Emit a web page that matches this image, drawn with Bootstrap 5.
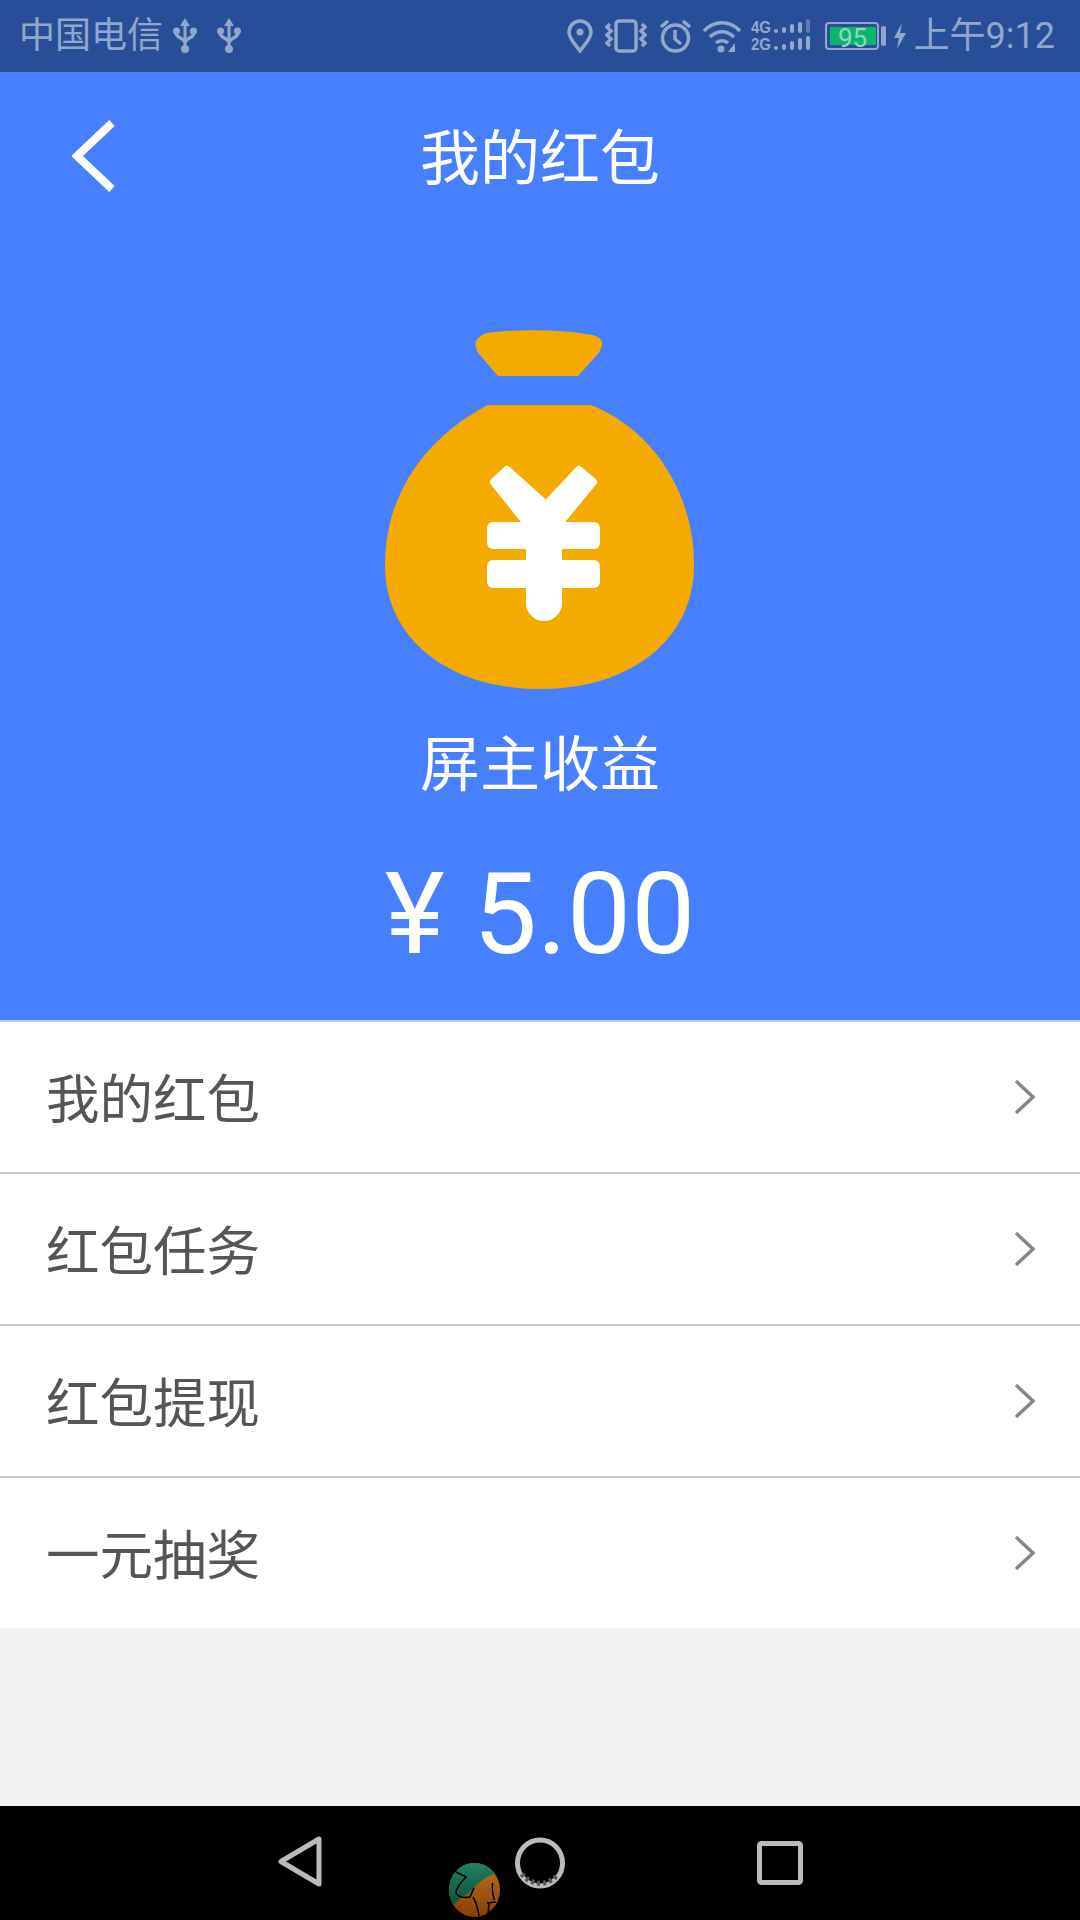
<!DOCTYPE html>
<html lang="zh">
<head>
  <meta charset="UTF-8">
  <title>我的红包</title>
  <meta name="viewport" content="width=device-width, initial-scale=1">
  <link href="https://cdn.jsdelivr.net/npm/bootstrap@5.3.0/dist/css/bootstrap.min.css" rel="stylesheet">
  <style>
    body { width: 1080px; height: 1920px; background: #f2f2f2; font-family: Roboto, "Noto Sans CJK SC", sans-serif; overflow: hidden; }
    .phone-page { height: 1920px; }
    .status-strip { height: 72px; background: #284e99; color: #93a6cc; font-size: 36px; line-height: 72px; padding: 0 25px 0 19px; }
    .status-strip svg { display: block; flex: none; }
    .status-strip .st-ico { fill: none; stroke: #93a6cc; stroke-width: 3.5; }
    .status-strip .st-fill { fill: #93a6cc; stroke: none; }
    .carrier-text { margin-right: 10px; }
    .usb-gap { margin-left: 20px; }
    .ico-gap { margin-left: 12px; }
    .wifi-gap { margin-left: 10px; }
    .net-gap { margin-left: 9px; }
    .batt-gap { margin-left: 14px; }
    .tail-gap { margin-left: 2px; }
    .bolt-gap { margin-left: 7px; }
    .clock-text { margin-left: 8px; white-space: nowrap; }
    .net-text { font-family: "Liberation Sans", sans-serif; font-size: 16px; font-weight: 700; fill: #93a6cc; }
    .batt-box { width: 54px; height: 28px; border: 2px solid #93a6cc; border-radius: 4px; padding: 3px; }
    .batt-level { background: #0ab66c; color: #93d5c0; font-size: 26px; line-height: 22px; height: 100%; width: 46px; text-align: center; }
    .hero-box { height: 948px; background: #4680ff; color: #fff; }
    .title-row { height: 172px; font-size: 60px; line-height: 176px; text-align: center; }
    .back-ico { position: absolute; left: 72px; top: 48px; }
    .bag-ico { display: block; margin: 66px auto 0 auto; }
    .earn-label { margin-top: 26px; font-size: 60px; line-height: 80px; text-align: center; }
    .earn-amount { margin-top: 48px; font-size: 114px; line-height: 120px; text-align: center; }
    .menu-list { border-top: 2px solid #ccc; }
    .menu-list .list-group-item { height: 152px; padding: 0 44px 0 46px; font-size: 53.5px; color: #555; border-color: #ccc; border-bottom-width: 2px; background: #fff; }
    .menu-list .list-group-item:last-child { height: 150px; border-bottom-width: 0; }
    .menu-text { padding-top: 9px; }
    .filler-box { flex: 1; }
    .nav-strip { height: 114px; background: #000; }
    .nav-ico { position: absolute; top: 0; left: 0; }
  </style>
</head>
<body class="m-0">
  <div class="phone-page d-flex flex-column">

    <!-- status bar -->
    <div class="status-strip d-flex align-items-center">
      <span class="carrier-text">中国电信</span>
      <svg width="24" height="36" viewBox="0 0 24 36"><path class="st-fill" d="M12 0l5 8h-3.500v20h-3V8H7z"/><circle class="st-fill" cx="12" cy="31" r="4"/><circle class="st-fill" cx="3.500" cy="13" r="3.500"/><circle class="st-fill" cx="20.500" cy="13" r="3.500"/><path class="st-ico" d="M3.500 13v3c0 4 8.500 4 8.500 9M20.500 13v3c0 4-8.500 4-8.500 9"/></svg>
      <svg class="usb-gap" width="24" height="36" viewBox="0 0 24 36"><path class="st-fill" d="M12 0l5 8h-3.500v20h-3V8H7z"/><circle class="st-fill" cx="12" cy="31" r="4"/><circle class="st-fill" cx="3.500" cy="13" r="3.500"/><circle class="st-fill" cx="20.500" cy="13" r="3.500"/><path class="st-ico" d="M3.500 13v3c0 4 8.500 4 8.500 9M20.500 13v3c0 4-8.500 4-8.500 9"/></svg>

      <div class="ms-auto d-flex align-items-center">
        <!-- location -->
        <svg width="26" height="34" viewBox="0 0 26 34"><path class="st-ico" d="M13 32C8 25 2 20 2 13a11 11 0 0 1 22 0c0 7-6 12-11 19z"/><circle class="st-fill" cx="13" cy="13" r="3.500"/></svg>
        <!-- vibrate -->
        <svg class="ico-gap" width="42" height="34" viewBox="0 0 42 34"><rect class="st-ico" x="11" y="2" width="20" height="30" rx="3"/><path class="st-ico" d="M5 5l-3 3 4 4-4 4 4 4-4 4 3 3M37 5l3 3-4 4 4 4-4 4 4 4-3 3"/></svg>
        <!-- alarm -->
        <svg class="ico-gap" width="33" height="34" viewBox="0 0 33 34"><circle class="st-ico" cx="16.500" cy="19" r="13"/><path class="st-ico" d="M16 11v9l6 5M2 8l7-6M31 8l-7-6"/></svg>
        <!-- wifi -->
        <svg class="wifi-gap" width="40" height="34" viewBox="0 0 40 34"><path class="st-ico" d="M2 12c10-11 26-11 36 0M8 18c7-7 17-7 24 0M14 24c3-3 9-3 12 0"/><circle class="st-fill" cx="19" cy="30" r="3.500"/><path class="st-fill" d="M33 24v9h-7z"/></svg>
        <!-- 4G / 2G signal -->
        <svg class="net-gap" width="60" height="38" viewBox="0 0 60 38">
          <text class="net-text" x="0" y="16" textLength="20" lengthAdjust="spacingAndGlyphs">4G</text><text class="net-text" x="0" y="33" textLength="20" lengthAdjust="spacingAndGlyphs">2G</text>
          <g class="st-fill"><rect x="23" y="12" width="4" height="4" rx="2"/><rect x="31" y="10" width="4" height="6" rx="2"/><rect x="39" y="7" width="4" height="9" rx="2"/><rect x="47" y="5" width="4" height="11" rx="2"/><rect x="55" y="2" width="4" height="14" rx="2" opacity=".5"/><rect x="23" y="29" width="4" height="4" rx="2"/><rect x="31" y="27" width="4" height="6" rx="2"/><rect x="39" y="24" width="4" height="9" rx="2"/><rect x="47" y="21" width="4" height="12" rx="2"/><rect x="55" y="19" width="4" height="14" rx="2"/></g>
        </svg>
        <!-- battery -->
        <div class="batt-box batt-gap"><div class="batt-level">95</div></div>
        <svg class="tail-gap" width="6" height="20" viewBox="0 0 6 20"><rect class="st-fill" width="5" height="20" rx="2"/></svg>
        <svg class="bolt-gap" width="12" height="26" viewBox="0 0 12 26"><path class="st-fill" d="M8 0L0 15h5l-2 11 9-16H6z"/></svg>
        <span class="clock-text">上午9:12</span>
      </div>
    </div>

    <!-- blue header -->
    <div class="hero-box">
      <div class="title-row position-relative">
        <svg class="back-ico" width="48" height="76" viewBox="0 0 48 76"><path d="M40 3L5 36l35 33" fill="none" stroke="#fff" stroke-width="8"/></svg>
        我的红包
      </div>
      <svg class="bag-ico" width="340" height="390" viewBox="10 0 340 390">
        <path fill="#f5aa00" d="M138 66L218 66L236 46C246 35 243 27 232 25C205 19 150 19 128 23C114 26 113 36 119 44Z"/>
        <path fill="#f5aa00" d="M128 95L231 95C290 118 334 180 334 255C334 330 270 379 180 379C90 379 25 330 25 255C25 180 70 125 128 95Z"/>
        <g fill="#fff">
          <path stroke="#fff" stroke-width="8" stroke-linejoin="round" d="M134 172L147 160L186 195L219 160L233 172L200 212H166Z"/>
          <rect x="127" y="212" width="113" height="27" rx="6"/>
          <rect x="127" y="250" width="113" height="28" rx="6"/>
          <rect x="166" y="205" width="36" height="106" rx="18"/>
        </g>
      </svg>
      <div class="earn-label">屏主收益</div>
      <div class="earn-amount">¥ 5.00</div>
    </div>

    <!-- menu -->
    <div class="list-group list-group-flush menu-list rounded-0">
      <div class="list-group-item d-flex justify-content-between align-items-center">
        <span class="menu-text">我的红包</span>
        <svg width="22" height="36" viewBox="0 0 22 36"><path d="M2 2l17 16L2 34" fill="none" stroke="#888" stroke-width="3.500"/></svg>
      </div>
      <div class="list-group-item d-flex justify-content-between align-items-center">
        <span class="menu-text">红包任务</span>
        <svg width="22" height="36" viewBox="0 0 22 36"><path d="M2 2l17 16L2 34" fill="none" stroke="#888" stroke-width="3.500"/></svg>
      </div>
      <div class="list-group-item d-flex justify-content-between align-items-center">
        <span class="menu-text">红包提现</span>
        <svg width="22" height="36" viewBox="0 0 22 36"><path d="M2 2l17 16L2 34" fill="none" stroke="#888" stroke-width="3.500"/></svg>
      </div>
      <div class="list-group-item d-flex justify-content-between align-items-center">
        <span class="menu-text">一元抽奖</span>
        <svg width="22" height="36" viewBox="0 0 22 36"><path d="M2 2l17 16L2 34" fill="none" stroke="#888" stroke-width="3.500"/></svg>
      </div>
    </div>

    <div class="filler-box"></div>

    <!-- android nav bar -->
    <div class="nav-strip position-relative">
      <svg class="nav-ico" width="1080" height="114" viewBox="0 0 1080 114">
        <defs>
          <linearGradient id="ballGreen" x1="0" y1="0" x2="0" y2="1"><stop offset="0" stop-color="#22805f"/><stop offset="1" stop-color="#0f4f3b"/></linearGradient>
          <linearGradient id="ballOrange" x1="0" y1="0" x2="0" y2="1"><stop offset="0" stop-color="#b5761f"/><stop offset="1" stop-color="#8a3c05"/></linearGradient>
        </defs>
        <path d="M319 33v45L281 55.500z" fill="none" stroke="#bbb" stroke-width="5" stroke-linejoin="round"/>
        <ellipse cx="540" cy="57" rx="22.500" ry="23" fill="none" stroke="#bbb" stroke-width="5"/>
        <path d="M522 68a22.500 23 0 0 0 36 0" fill="none" stroke="#555" stroke-width="5" stroke-dasharray="3 3"/>
        <rect x="759.500" y="37.500" width="41" height="39" rx="2" fill="none" stroke="#bbb" stroke-width="5"/>
        <!-- floating ball -->
        <ellipse cx="474.500" cy="84" rx="25.500" ry="27" fill="url(#ballOrange)"/>
        <path d="M454 99C450 94 449 89 449 84C449 69 460 57 474 57C483 57 490 61 495 68C487 70 480 75 474 82C470 86 466 89 462 91C459 93 456 96 454 99Z" fill="url(#ballGreen)"/>
        <path d="M456 66L466 71C460 77 456 82 456 87C458 91 464 92 470 91L474 82M473 91C476 96 478 103 479 110M492.500 77C492 84 493 90 494.500 94M487 97L496 96M489 97L488 109" fill="none" stroke="#000" stroke-width="1.500"/>
      </svg>
    </div>
  </div>

  <script src="https://cdn.jsdelivr.net/npm/bootstrap@5.3.0/dist/js/bootstrap.bundle.min.js"></script>
</body>
</html>
